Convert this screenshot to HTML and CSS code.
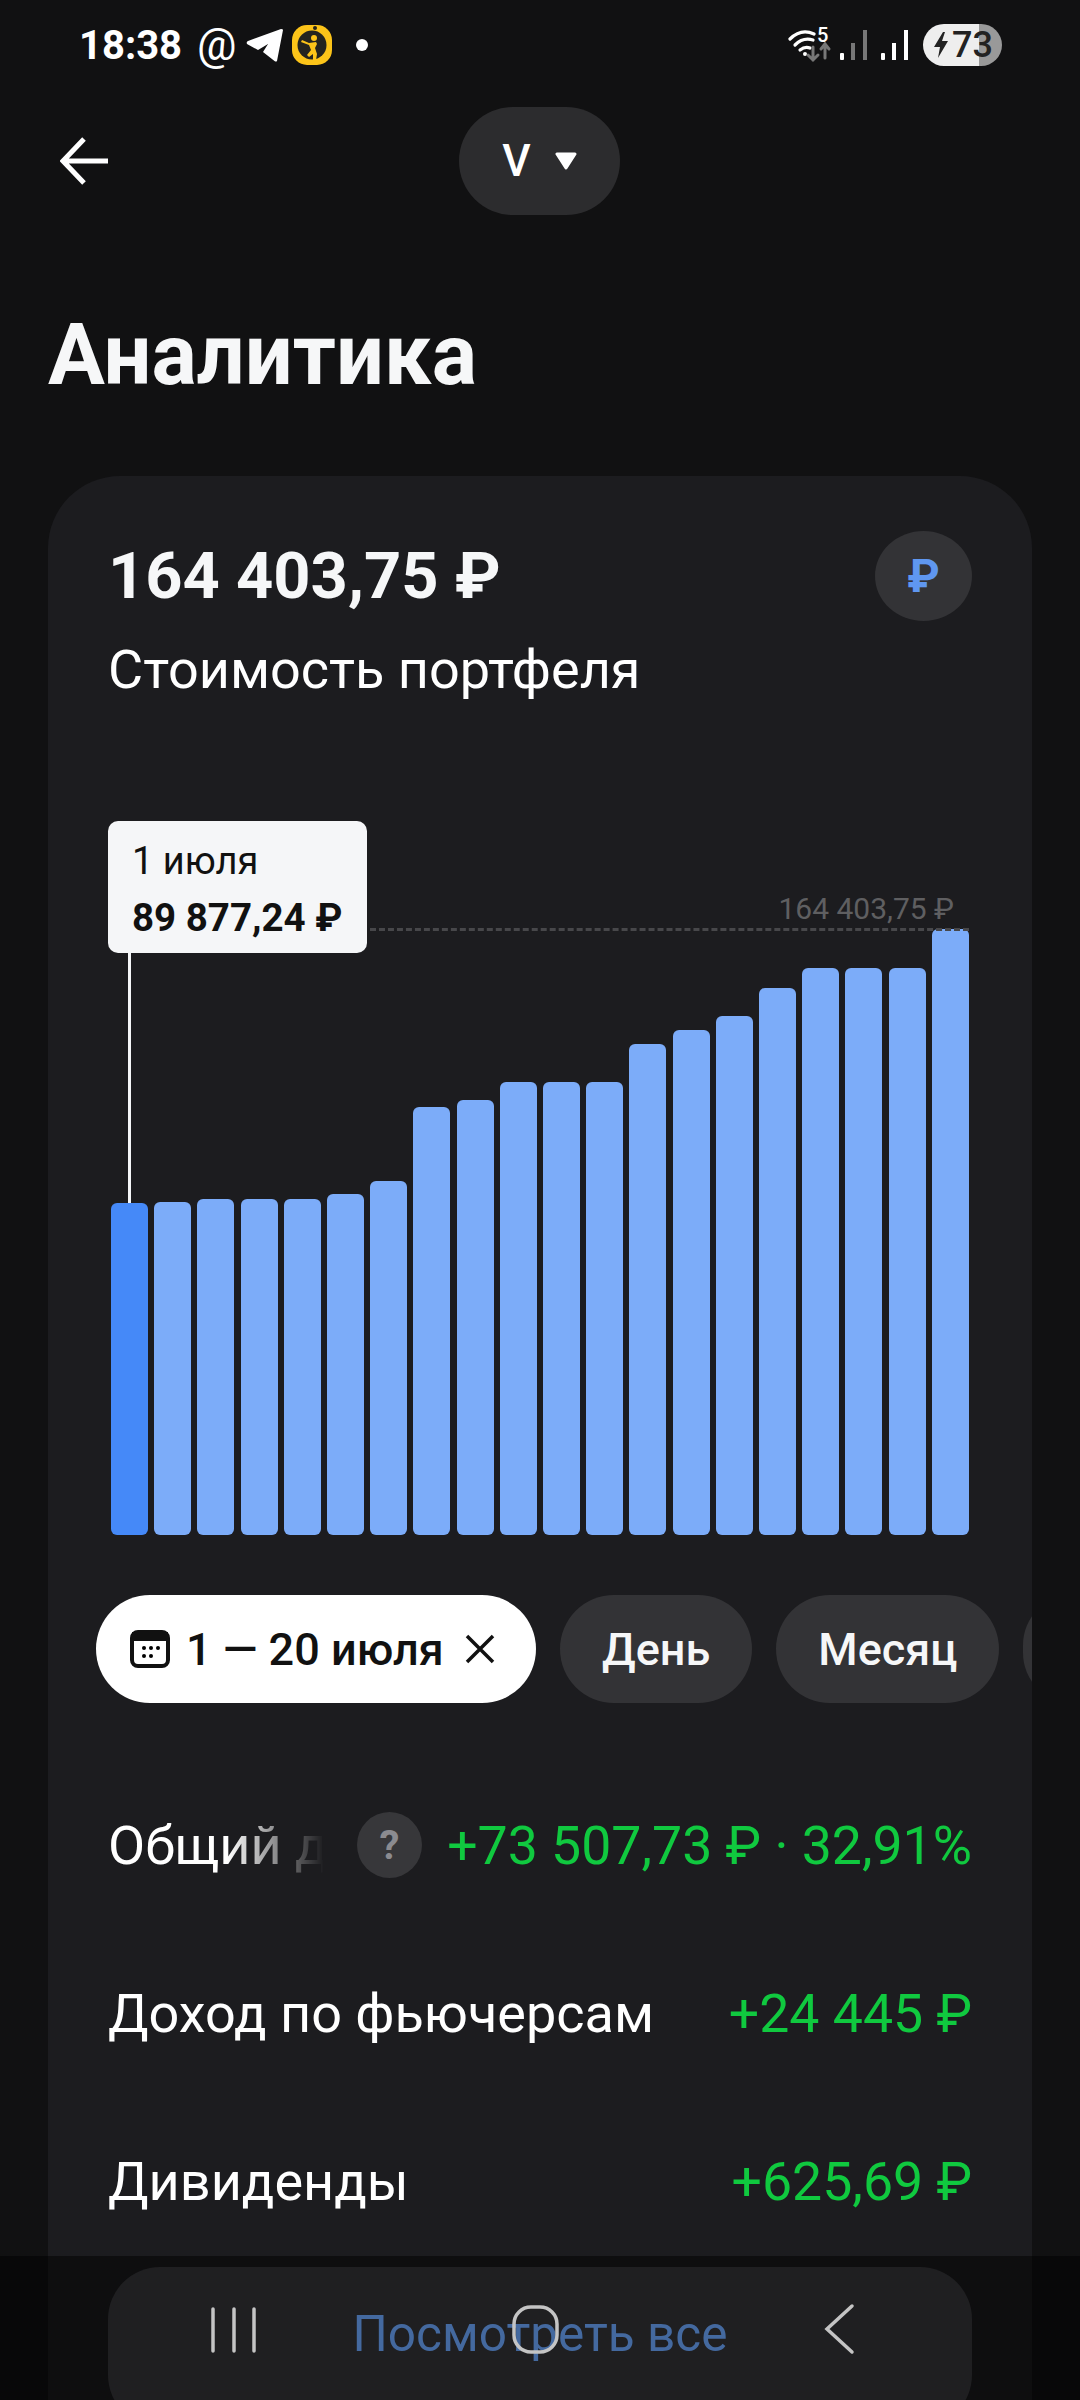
FILE: index.html
```html
<!DOCTYPE html>
<html lang="ru">
<head>
  <meta charset="UTF-8" />
  <title>Аналитика</title>
  <meta name="viewport" content="width=device-width, initial-scale=1.0" />
  <link rel="stylesheet" href="styles.css">
</head>
<body>
  <div class="status">
    <div class="status-left">
      <span class="time">18:38</span>
      <span class="at">@</span>
      <svg class="tg" width="38" height="33" viewBox="0 0 38 33"><path d="M37 1 L31 32 Q30 33 28.500 32 L17 23 L22 15 L12 21 L1 15 Q0 13 2 12 L35 0 Q37 0 37 1Z" fill="#fff"/></svg>
      <svg class="app" width="40" height="40" viewBox="0 0 40 40">
        <rect width="40" height="40" rx="15" fill="#fcc419"/>
        <circle cx="20" cy="20" r="14.500" fill="#24241f"/>
        <path d="M10 15 L17 18 L24 17 L25 19 L23 23 L25 29 L24 35 L21 35 L21 29 L17 32 L15 30 L19 25 L17 20 L9 17Z" fill="#fcc419"/>
        <circle cx="22" cy="13" r="3" fill="#fcc419"/>
        <circle cx="23" cy="3" r="2" fill="#24241f"/>
      </svg>
      <span class="dot"></span>
    </div>
    <div class="status-right">
      <svg class="wifi" width="44" height="44" viewBox="0 -4 44 44" fill="none" stroke="#fff" stroke-width="3.200" stroke-linecap="round">
        <path d="M2 12 Q13 1 26 7"/><path d="M7 18 Q15 10 25 13"/><path d="M12 23 Q17 19 22 21"/>
        <circle cx="17" cy="27" r="2" fill="#fff" stroke="none"/>
        <path d="M25 20 V33 M20 28 L25 33 L30 28" stroke="#777" stroke-width="3"/>
        <path d="M37 31 V18 M33 22 L37 17 L41 22" stroke="#777" stroke-width="3"/>
        <text x="29" y="15" class="wifi-num">5</text>
      </svg>
      <svg width="27" height="30" viewBox="0 0 27 30"><rect y="23" width="4" height="7" rx="1" fill="#fff"/><rect x="11" y="13" width="4" height="17" fill="#777"/><rect x="23" y="0" width="4" height="30" fill="#777"/></svg>
      <svg class="sig2" width="27" height="30" viewBox="0 0 27 30"><rect y="23" width="4" height="7" rx="1" fill="#fff"/><rect x="11" y="13" width="4" height="17" fill="#fff"/><rect x="23" y="0" width="4" height="30" fill="#fff"/></svg>
      <div class="battery">
        <svg width="16" height="26" viewBox="0 0 16 26"><path d="M10 0 L1 15 H7 L5 26 L15 9 H9 L12 0Z" fill="#222"/></svg>
        <span>73</span>
      </div>
    </div>
  </div>

  <div class="header">
    <svg class="back" width="48" height="48" viewBox="0 0 48 48" fill="none" stroke="#fff" stroke-width="5"><path d="M48 24 H3 M24 2 L3 24 L24 46"/></svg>
    <div class="account">
      <span>V</span>
      <svg width="22" height="18" viewBox="0 0 22 18"><path d="M2 2 H20 L11 16Z" fill="#fff" stroke="#fff" stroke-width="3" stroke-linejoin="round"/></svg>
    </div>
  </div>

  <h1 class="title">Аналитика</h1>

  <div class="card">
    <div class="card-top">
      <div>
        <div class="total">164 403,75 ₽</div>
        <div class="subtitle">Стоимость портфеля</div>
      </div>
      <div class="currency">₽</div>
    </div>

    <div class="chart">
      <div class="max-line"></div>
      <div class="max-label">164 403,75 ₽</div>
      <div class="pointer"></div>
      <div class="tooltip">
        <div class="tooltip-date">1 июля</div>
        <div class="tooltip-value">89 877,24 ₽</div>
      </div>
      <div class="bar active" style="height:332px"></div>
      <div class="bar" style="height:333px"></div>
      <div class="bar" style="height:336px"></div>
      <div class="bar" style="height:336px"></div>
      <div class="bar" style="height:336px"></div>
      <div class="bar" style="height:341px"></div>
      <div class="bar" style="height:354px"></div>
      <div class="bar" style="height:428px"></div>
      <div class="bar" style="height:435px"></div>
      <div class="bar" style="height:453px"></div>
      <div class="bar" style="height:453px"></div>
      <div class="bar" style="height:453px"></div>
      <div class="bar" style="height:491px"></div>
      <div class="bar" style="height:505px"></div>
      <div class="bar" style="height:519px"></div>
      <div class="bar" style="height:547px"></div>
      <div class="bar" style="height:567px"></div>
      <div class="bar" style="height:567px"></div>
      <div class="bar" style="height:567px"></div>
      <div class="bar" style="height:606px"></div>
    </div>

    <div class="chips">
      <div class="chip selected">
        <svg width="40" height="38" viewBox="0 0 40 38"><rect x="2" y="2" width="36" height="34" rx="6" fill="none" stroke="#111" stroke-width="4"/><rect x="2" y="2" width="36" height="9" fill="#111"/><circle cx="14" cy="18" r="2"/><circle cx="21" cy="18" r="2"/><circle cx="28" cy="18" r="2"/><circle cx="14" cy="26" r="2"/><circle cx="21" cy="26" r="2"/></svg>
        <span>1 — 20 июля</span>
        <svg class="close" width="30" height="30" viewBox="0 0 30 30" stroke="#111" stroke-width="3.500"><path d="M2 2 L28 28 M28 2 L2 28"/></svg>
      </div>
      <div class="chip">День</div>
      <div class="chip">Месяц</div>
      <div class="chip chip-more"></div>
    </div>

    <div class="row">
      <div class="row-label">
        <span class="fade">Общий д</span>
        <span class="help">?</span>
      </div>
      <span class="plus">+73 507,73 ₽ · 32,91%</span>
    </div>
    <div class="row">
      <span>Доход по фьючерсам</span>
      <span class="plus">+24 445 ₽</span>
    </div>
    <div class="row">
      <span>Дивиденды</span>
      <span class="plus">+625,69 ₽</span>
    </div>
  </div>

  <div class="bottom">
    <div class="see-all">
      <span>Посмотреть все</span>
      <svg class="nav-icons" width="864" height="133" viewBox="0 0 864 133" fill="none" stroke="#c4c4c4" stroke-linecap="round" stroke-width="3.500">
        <path d="M105 42 V84 M126 42 V84 M146 42 V84"/>
        <rect x="406" y="40" width="43" height="45" rx="17"/>
        <path d="M744 39 L719 62 L744 85" stroke-width="3.500"/>
      </svg>
    </div>
  </div>
</body>
</html>
```

FILE: styles.css
```css
* {
  box-sizing: border-box;
}

body {
  margin: 0;
  width: 1080px;
  height: 2400px;
  overflow: hidden;
  position: relative;
  background: #111112;
  color: #fff;
  font-family: Roboto, "Liberation Sans", sans-serif;
}

.status {
  height: 90px;
  padding: 0 78px 0 79px;
  display: flex;
  align-items: center;
  justify-content: space-between;
}

.status-left,
.status-right {
  display: flex;
  align-items: center;
}

.time {
  font-size: 40px;
  font-weight: 700;
  margin-right: 15px;
}

.at {
  font-size: 44px;
  margin-right: 9px;
}

.tg {
  margin-right: 8px;
}

.dot {
  width: 12px;
  height: 12px;
  border-radius: 50%;
  background: #fff;
  margin-left: 24px;
}

.status-right svg {
  margin-right: 14px;
}

.status-right .wifi {
  margin-right: 8px;
}

.wifi-num {
  font-size: 20px;
  font-weight: 500;
  fill: #fff;
  stroke: none;
}

.status-right .sig2 {
  margin-right: 15px;
}

.battery {
  width: 79px;
  height: 42px;
  border-radius: 21px;
  background: linear-gradient(to right, #eee 71%, #999 71%);
  color: #222;
  font-size: 36px;
  font-weight: 500;
  display: flex;
  align-items: center;
  padding-left: 10px;
  gap: 3px;
}

.battery svg {
  margin-right: 0;
}

.header {
  margin-top: 17px;
  height: 108px;
  padding: 0 60px;
  display: grid;
  grid-template-columns: 1fr auto 1fr;
  align-items: center;
}

.back {
  display: block;
}

.account {
  width: 161px;
  height: 108px;
  margin-right: 1px;
  border-radius: 54px;
  background: #2c2c2e;
  display: flex;
  align-items: center;
  justify-content: center;
  gap: 24px;
  font-size: 44px;
  font-weight: 500;
}

.title {
  margin: 90px 0 0 48px;
  font-size: 84.7px;
  line-height: 100px;
  font-weight: 700;
  color: #f6f7f8;
}

.card {
  margin: 71px 48px 0;
  height: 2000px;
  border-radius: 72px;
  background: #1c1c1f;
  padding: 65px 60px 0 60px;
  overflow: hidden;
}

.card-top {
  display: flex;
  justify-content: space-between;
  align-items: flex-start;
}

.total {
  font-size: 65px;
  line-height: 70px;
  font-weight: 700;
  color: #f6f7f8;
}

.subtitle {
  margin-top: 30px;
  font-size: 54px;
  line-height: 58px;
}

.currency {
  width: 97px;
  height: 90px;
  margin-top: -10px;
  border-radius: 50%;
  background: #333336;
  color: #5f97f0;
  font-size: 46px;
  font-weight: 700;
  display: flex;
  align-items: center;
  justify-content: center;
}

.chart {
  position: relative;
  margin: 230px 3px 0 3px;
  height: 606px;
  display: flex;
  align-items: flex-end;
  gap: 6.2px;
}

.bar {
  flex: 1;
  border-radius: 6px;
  background: #7cacf9;
}

.bar.active {
  background: #4589f8;
}

.max-line {
  position: absolute;
  top: -1px;
  left: 259px;
  right: 0;
  border-top: 3px dashed #47474a;
}

.max-label {
  position: absolute;
  right: 15px;
  bottom: 100%;
  margin-bottom: 2px;
  font-size: 30px;
  line-height: 36px;
  color: #5f5f61;
}

.pointer {
  position: absolute;
  left: 17px;
  top: 24px;
  width: 3px;
  height: 250px;
  background: #f5f6f8;
}

.tooltip {
  position: absolute;
  left: -3px;
  top: -108px;
  width: 259px;
  height: 132px;
  padding: 18px 24px 0;
  border-radius: 10px;
  background: #f5f6f8;
  color: #111;
}

.tooltip-date {
  font-size: 38px;
  line-height: 44px;
}

.tooltip-value {
  margin-top: 13px;
  font-size: 38.5px;
  line-height: 44px;
  font-weight: 700;
  white-space: nowrap;
}

.chips {
  margin: 60px -60px 0 -12px;
  display: flex;
  gap: 24px;
  overflow: hidden;
}

.chip {
  flex: none;
  height: 108px;
  padding: 0 42px;
  border-radius: 54px;
  background: #333336;
  font-size: 45px;
  font-weight: 500;
  color: #f6f7f8;
  display: flex;
  align-items: center;
}

.chip.selected {
  width: 440px;
  padding: 0 34px;
  background: #fff;
  color: #111;
  gap: 16px;
}

.chip-more {
  width: 100px;
}

.close {
  margin-left: 5px;
}

.row {
  height: 168px;
  display: flex;
  align-items: center;
  justify-content: space-between;
  font-size: 54px;
}

.chips + .row {
  margin-top: 58px;
}

.row-label {
  display: flex;
  align-items: center;
}

.fade {
  width: 216px;
  white-space: nowrap;
  -webkit-mask-image: linear-gradient(to right, #000 55%, transparent 100%);
  mask-image: linear-gradient(to right, #000 55%, transparent 100%);
}

.help {
  width: 65px;
  height: 66px;
  margin-left: 33px;
  border-radius: 50%;
  background: #37373a;
  color: #8b8b90;
  font-size: 40px;
  font-weight: 700;
  display: flex;
  align-items: center;
  justify-content: center;
}

.plus {
  font-size: 53.6px;
  color: #10c93f;
}

.bottom {
  position: absolute;
  left: 0;
  right: 0;
  bottom: 0;
  height: 144px;
  padding: 11px 108px 0;
  background: rgba(0, 0, 0, 0.5);
}

.see-all {
  position: relative;
  height: 160px;
  border-radius: 52px;
  background: #1f1f21;
  padding-top: 38px;
  text-align: center;
  font-size: 49.5px;
  line-height: 58px;
  color: #44699f;
}

.nav-icons {
  position: absolute;
  left: 0;
  top: 0;
}
```
